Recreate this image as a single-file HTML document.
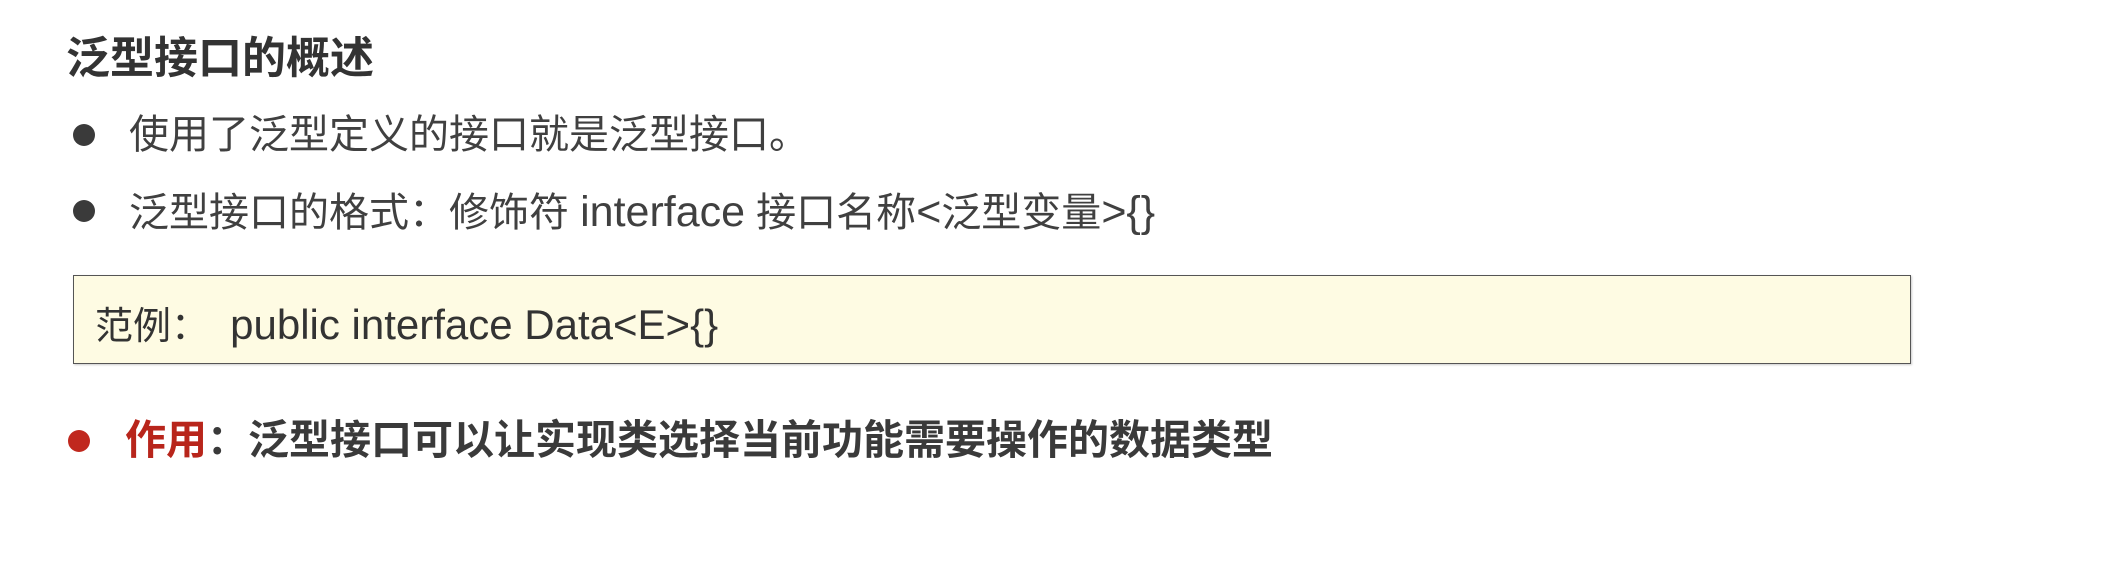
<!DOCTYPE html>
<html><head><meta charset="utf-8"><style>
html,body{margin:0;padding:0;background:#fff;width:2120px;height:564px;overflow:hidden;}
body{font-family:"Liberation Sans","Noto Sans CJK SC",sans-serif;color:#404040;position:relative;}
.a{position:absolute;white-space:nowrap;line-height:1;}
.dot{position:absolute;width:22px;height:22px;border-radius:50%;background:#3a3a3a;}
.l{font-size:43px;}
</style></head><body>
<div class="a" style="left:66px;top:37px;font-size:44px;font-weight:bold;color:#333;">泛型接口的概述</div>
<div class="dot" style="left:73px;top:124px;"></div>
<div class="a" style="left:129px;top:115px;font-size:40px;">使用了泛型定义的接口就是泛型接口。</div>
<div class="dot" style="left:73px;top:200px;"></div>
<div class="a" style="left:129px;top:191px;font-size:40px;">泛型接口的格式：修饰符 <span class="l">interface</span> 接口名称<span class="l">&lt;</span>泛型变量<span class="l">&gt;{}</span></div>
<div style="position:absolute;left:73px;top:275px;width:1838px;height:89px;border:1.5px solid #555;background:#fefbe3;box-shadow:1px 1px 2px rgba(0,0,0,.2);box-sizing:border-box;"></div>
<div class="a" style="left:95px;top:304px;font-size:38px;color:#333;">范例：&nbsp; <span style="font-size:42px;">public interface Data&lt;E&gt;{}</span></div>
<div class="dot" style="left:68px;top:430px;background:#c0281e;"></div>
<div class="a" style="left:125px;top:420px;font-size:41px;font-weight:bold;color:#3a3a3a;"><span style="color:#b8251b;">作用</span>：泛型接口可以让实现类选择当前功能需要操作的数据类型</div>
</body></html>
